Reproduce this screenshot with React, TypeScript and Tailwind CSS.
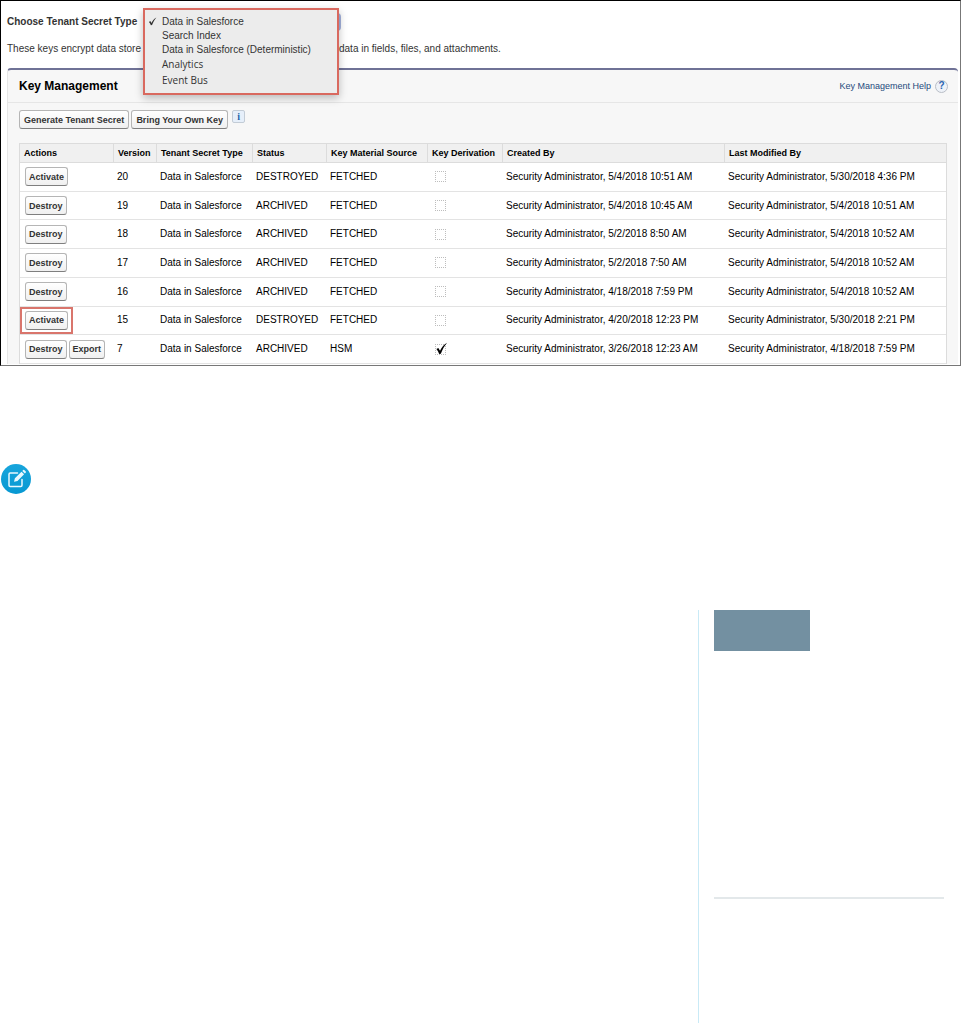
import React, { useState } from "react";
import clsx from "clsx";

type KeyRow = {
  version: string;
  status: "DESTROYED" | "ARCHIVED";
  source: "FETCHED" | "HSM";
  derived?: boolean;
  actions: string[];
  highlighted?: boolean;
  created: string;
  modified: string;
};

const secretTypes = [
  "Data in Salesforce",
  "Search Index",
  "Data in Salesforce (Deterministic)",
  "Analytics",
  "Event Bus",
];

const columns = [
  { label: "Actions", width: "w-[93px]" },
  { label: "Version", width: "w-[43px]" },
  { label: "Tenant Secret Type", width: "w-24" },
  { label: "Status", width: "w-[74px]" },
  { label: "Key Material Source", width: "w-[101px]" },
  { label: "Key Derivation", width: "w-[75px]" },
  { label: "Created By", width: "w-[222px]" },
  { label: "Last Modified By", width: "" },
];

const rows: KeyRow[] = [
  { version: "20", status: "DESTROYED", source: "FETCHED", actions: ["Activate"], created: "5/4/2018 10:51 AM", modified: "5/30/2018 4:36 PM" },
  { version: "19", status: "ARCHIVED", source: "FETCHED", actions: ["Destroy"], created: "5/4/2018 10:45 AM", modified: "5/4/2018 10:51 AM" },
  { version: "18", status: "ARCHIVED", source: "FETCHED", actions: ["Destroy"], created: "5/2/2018 8:50 AM", modified: "5/4/2018 10:52 AM" },
  { version: "17", status: "ARCHIVED", source: "FETCHED", actions: ["Destroy"], created: "5/2/2018 7:50 AM", modified: "5/4/2018 10:52 AM" },
  { version: "16", status: "ARCHIVED", source: "FETCHED", actions: ["Destroy"], created: "4/18/2018 7:59 PM", modified: "5/4/2018 10:52 AM" },
  { version: "15", status: "DESTROYED", source: "FETCHED", actions: ["Activate"], highlighted: true, created: "4/20/2018 12:23 PM", modified: "5/30/2018 2:21 PM" },
  { version: "7", status: "ARCHIVED", source: "HSM", derived: true, actions: ["Destroy", "Export"], created: "3/26/2018 12:23 AM", modified: "4/18/2018 7:59 PM" },
];

function SmallButton({ children, wide }: { children: React.ReactNode; wide?: boolean }) {
  return (
    <button
      type="button"
      className={clsx(
        "h-[19px] rounded-[3px] border border-[#b5b5b5] border-b-[#7f7f7f] bg-linear-to-b from-white to-[#f0f0f0] text-[9px] leading-4 font-bold whitespace-nowrap text-[#333]",
        wide ? "px-1" : "px-[3px]",
      )}
    >
      {children}
    </button>
  );
}

function TickIcon({ className }: { className: string }) {
  return (
    <svg viewBox="0 0 14 14" className={className} aria-hidden="true">
      <path d="M1.500 7.600 3.600 6.400 5.400 9.400C7.300 5.600 9.600 2.800 13 .800 10.200 4.200 8 8 6.300 12.600L4.500 12.800C3.700 10.700 2.800 9 1.500 7.600Z" fill="currentColor" />
    </svg>
  );
}

function SecretTypePicker() {
  const [selected, setSelected] = useState(secretTypes[0]);
  return (
    <div className="flex items-center">
      <label htmlFor="secret-type" className="w-[136px] text-[10px] leading-4 font-bold whitespace-nowrap text-[#333]">
        Choose Tenant Secret Type
      </label>
      <div className="relative">
        <select
          id="secret-type"
          value={selected}
          onChange={(event) => setSelected(event.target.value)}
          className="block h-[18px] w-[198px] appearance-none rounded-[4px] bg-[#a3b1dc] text-[10px] text-transparent"
        >
          {secretTypes.map((type) => (
            <option key={type}>{type}</option>
          ))}
        </select>
        <ul
          role="listbox"
          aria-label="Tenant secret types"
          className="absolute -top-[5px] left-0 z-10 h-[87px] w-[196px] border-2 border-[#d9695f] bg-[#ececec] pt-1 shadow-[0_3px_8px_rgba(0,0,0,0.25)]"
        >
          {secretTypes.map((type, index) => (
            <li
              key={type}
              role="option"
              aria-selected={type === selected}
              onClick={() => setSelected(type)}
              className={clsx(
                "flex items-center pl-[3px] text-[10px] whitespace-nowrap text-[#333]",
                index < 3 ? "h-[14px] font-['Liberation_Sans',sans-serif]" : "h-4 font-['Open_Sans',sans-serif]",
              )}
            >
              <span className="flex w-[14px] shrink-0">
                {type === selected && <TickIcon className="size-[9px]" />}
              </span>
              {type}
            </li>
          ))}
        </ul>
      </div>
    </div>
  );
}

function DerivationBox({ checked, version }: { checked?: boolean; version: string }) {
  return (
    <span className="relative block size-[11px]">
      <input
        type="checkbox"
        checked={!!checked}
        readOnly
        aria-label={`Key derivation for version ${version}`}
        className="block size-[11px] appearance-none border border-dotted border-[#bdbdbd] bg-white"
      />
      {checked && <TickIcon className="pointer-events-none absolute -top-0.5 left-0 size-[13px] text-black" />}
    </span>
  );
}

function KeyTable() {
  return (
    <table className="h-[221px] w-full table-fixed border-separate border-spacing-0 border-x border-t border-[#dcdcdc] bg-white text-left text-black">
      <thead>
        <tr className="h-[19px]">
          {columns.map((column, index) => (
            <th
              key={column.label}
              scope="col"
              className={clsx(
                "h-[19px] border-b border-[#dcdcdc] bg-[#f0f0f0] pl-1 text-[9px] leading-3 font-bold whitespace-nowrap",
                index > 0 && "border-l",
                column.width,
              )}
            >
              {column.label}
            </th>
          ))}
        </tr>
      </thead>
      <tbody className="text-[10px] leading-3 whitespace-nowrap [&_td]:border-b [&_td]:border-[#e3e3e3] [&_td]:pl-1">
        {rows.map((row) => (
          <tr key={row.version}>
            <td>
              <div className="flex">
                <div className={clsx("flex gap-0.5 px-px", row.highlighted && "outline-2 outline-offset-2 outline-[#d9756c]")}>
                  {row.actions.map((action) => (
                    <SmallButton key={action}>{action}</SmallButton>
                  ))}
                </div>
              </div>
            </td>
            <td>{row.version}</td>
            <td>Data in Salesforce</td>
            <td>{row.status}</td>
            <td>{row.source}</td>
            <td>
              <div className="pl-1">
                <DerivationBox checked={row.derived} version={row.version} />
              </div>
            </td>
            <td>Security Administrator, {row.created}</td>
            <td>Security Administrator, {row.modified}</td>
          </tr>
        ))}
      </tbody>
    </table>
  );
}

function KeyManagement() {
  return (
    <section className="rounded-t-[4px] border-t-2 border-l border-t-[#6f7296] border-l-[#e6e6e6] bg-[#f7f7f7]">
      <header className="flex h-[33px] items-center justify-between border-b border-[#e6e6e6] pr-[10px] pl-[11px]">
        <h2 className="text-[12px] leading-4 font-bold text-black">Key Management</h2>
        <a href="#help" className="flex items-center gap-1 text-[9px] leading-4 text-[#1f4a7c]">
          Key Management Help
          <span className="flex size-[13px] items-center justify-center rounded-full border border-[#b9bec6] bg-[#eef2f8] text-[10px] leading-3 font-bold text-[#2a64b0]">
            ?
          </span>
        </a>
      </header>
      <div className="flex h-10 items-start gap-0.5 pt-[7px] pl-[11px]">
        <SmallButton wide>Generate Tenant Secret</SmallButton>
        <SmallButton wide>Bring Your Own Key</SmallButton>
        <button
          type="button"
          aria-label="Information"
          className="ml-0.5 flex size-[13px] items-center justify-center rounded-[2px] border border-[#c3ccd6] bg-[#e6effa] font-['Liberation_Serif',serif] text-[10px] leading-3 font-bold text-[#1d62a8]"
        >
          i
        </button>
      </div>
      <div className="px-[11px]">
        <KeyTable />
      </div>
    </section>
  );
}

function NoteIcon() {
  return (
    <svg viewBox="0 0 30 30" className="size-[30px]" role="img" aria-label="Note">
      <defs>
        <linearGradient id="note-fill" x1="0" y1="0" x2="0" y2="1">
          <stop offset="0" stopColor="#18a5dc" />
          <stop offset="1" stopColor="#0798d2" />
        </linearGradient>
      </defs>
      <circle cx="15" cy="15" r="15" fill="url(#note-fill)" />
      <path d="M16.500 9H9.200Q8 9 8 10.200V21.300Q8 22.500 9.200 22.500H19.800Q21 22.500 21 21.300V15.500" fill="none" stroke="#e9f8fe" strokeWidth="1.500" strokeLinecap="round" />
      <path d="m13 17.800.9-3.500 6.600-6.600 2.600 2.600-6.600 6.600zM21.300 6.900l.9-.9q.5-.4 1 0l1.600 1.600q.4.500 0 1l-.9.900z" fill="#e9f8fe" />
    </svg>
  );
}

export default function App() {
  return (
    <main className="flex min-h-screen flex-col bg-white font-['Liberation_Sans',Arial,sans-serif]">
      <div className="h-[366px] overflow-hidden border border-black border-r-[#777] border-b-[#777] bg-white pt-3 pr-0.5 pl-1.5">
        <SecretTypePicker />
        <p className="flex gap-[196px] pt-[10px] pb-[11px] text-[10px] leading-4 whitespace-nowrap text-[#333]">
          <span className="w-[136px]">These keys encrypt data store</span>
          <span>data in fields, files, and attachments.</span>
        </p>
        <KeyManagement />
      </div>
      <div className="pt-[98px] pl-px">
        <NoteIcon />
      </div>
      <aside className="mt-[116px] ml-auto flex w-[263px] grow flex-col border-l border-[#c9eaf6] pr-[17px] pl-[15px]">
        <div className="h-[41px] w-24 bg-[#7390a1]" />
        <hr className="mt-[246px] border-t-2 border-[#e3e8ea]" />
      </aside>
    </main>
  );
}
